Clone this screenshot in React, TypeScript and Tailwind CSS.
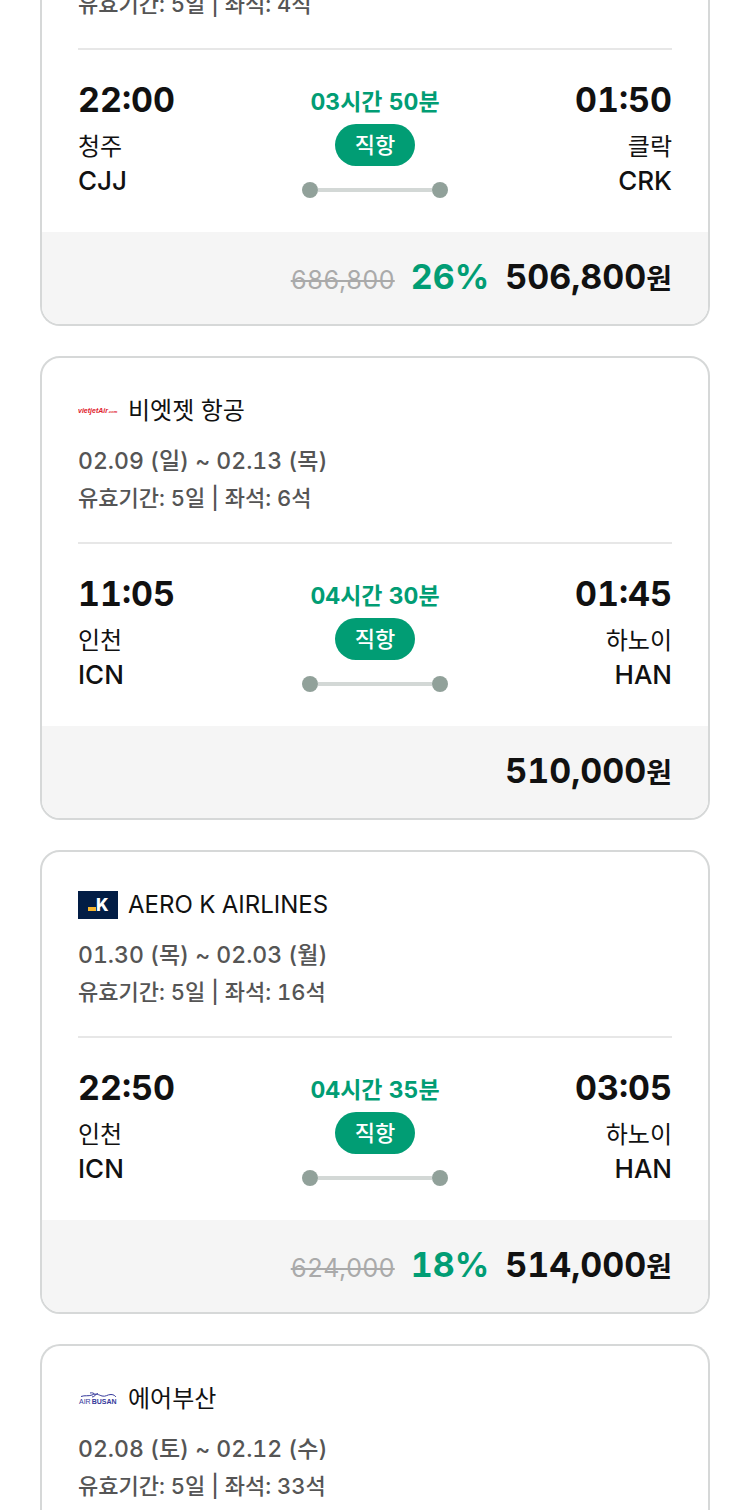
import { clsx } from "clsx";

type Flight = {
  id: number;
  airline?: string;
  logo?: "vietjet" | "aerok" | "airbusan";
  dates?: string;
  seats: number;
  route?: {
    departTime: string;
    departCity: string;
    departCode: string;
    arriveTime: string;
    arriveCity: string;
    arriveCode: string;
    duration: string;
  };
  originalPrice?: string;
  discount?: string;
  price?: string;
};

const flights: Flight[] = [
  {
    id: 1,
    seats: 4,
    route: {
      departTime: "22:00",
      departCity: "청주",
      departCode: "CJJ",
      arriveTime: "01:50",
      arriveCity: "클락",
      arriveCode: "CRK",
      duration: "03시간 50분",
    },
    originalPrice: "686,800",
    discount: "26%",
    price: "506,800",
  },
  {
    id: 2,
    airline: "비엣젯 항공",
    logo: "vietjet",
    dates: "02.09 (일) ~ 02.13 (목)",
    seats: 6,
    route: {
      departTime: "11:05",
      departCity: "인천",
      departCode: "ICN",
      arriveTime: "01:45",
      arriveCity: "하노이",
      arriveCode: "HAN",
      duration: "04시간 30분",
    },
    price: "510,000",
  },
  {
    id: 3,
    airline: "AERO K AIRLINES",
    logo: "aerok",
    dates: "01.30 (목) ~ 02.03 (월)",
    seats: 16,
    route: {
      departTime: "22:50",
      departCity: "인천",
      departCode: "ICN",
      arriveTime: "03:05",
      arriveCity: "하노이",
      arriveCode: "HAN",
      duration: "04시간 35분",
    },
    originalPrice: "624,000",
    discount: "18%",
    price: "514,000",
  },
  {
    id: 4,
    airline: "에어부산",
    logo: "airbusan",
    dates: "02.08 (토) ~ 02.12 (수)",
    seats: 33,
  },
];

function AirlineLogo({ name }: { name: Flight["logo"] }) {
  if (name === "aerok") {
    return (
      <svg width="40" height="28" viewBox="0 0 40 28" aria-hidden="true">
        <rect width="40" height="28" fill="#021d45" />
        <rect x="10" y="16" width="8" height="4" fill="#f5b52e" />
        <text x="18" y="20" fill="#fff" fontSize="17" fontWeight="800" fontFamily="Inter, sans-serif">
          K
        </text>
      </svg>
    );
  }
  if (name === "vietjet") {
    return (
      <svg width="40" height="28" viewBox="0 0 40 28" aria-hidden="true" fill="#e0202b">
        <text x="0" y="16" fontSize="7" fontStyle="italic" fontWeight="700" fontFamily="Liberation Sans, sans-serif">
          vietjet
          <tspan fontSize="7">Air</tspan>
          <tspan fontSize="4">.com</tspan>
        </text>
      </svg>
    );
  }
  return (
    <svg width="40" height="28" viewBox="0 0 40 28" aria-hidden="true" fill="#35399b">
      <path
        d="M3 11.500C7 10 10 11.500 14 10C18 8 21 10 24 11C28 12 29 9.500 33 9.500C36 9.500 37 11 38 12M12 8C14 7.500 16 8 17 9.500M14 12C17 12 17 9 20 8.500"
        fill="none"
        stroke="#35399b"
        strokeWidth="1"
      />
      <text x="1" y="19" fontSize="7" fontFamily="Liberation Sans, sans-serif">
        AIR
        <tspan dx="1" fontWeight="700">BUSAN</tspan>
      </text>
    </svg>
  );
}

function Place({ time, city, code, end }: { time: string; city: string; code: string; end?: boolean }) {
  return (
    <div className={clsx("flex flex-1 flex-col", end && "items-end")}>
      <strong className="mb-2 text-[34px] leading-[44px] font-bold">{time}</strong>
      <span className="text-2xl leading-[34px]">{city}</span>
      <span className="text-[26px] leading-[34px] font-medium">{code}</span>
    </div>
  );
}

function FlightCard({ flight }: { flight: Flight }) {
  const { route } = flight;

  return (
    <li
      className={clsx(
        "overflow-hidden border-x-2 border-[#d6d8d8] bg-white",
        flight.airline && "rounded-t-[20px] border-t-2",
        flight.price && "rounded-b-[20px] border-b-2",
        !flight.price && "grow"
      )}
    >
      <div className={clsx("px-9", flight.airline && "pt-9")}>
        {flight.airline && (
          <h2 className="mb-[14px] flex items-center gap-[10px] text-2xl leading-[34px] font-normal">
            <AirlineLogo name={flight.logo} />
            <span>{flight.airline}</span>
          </h2>
        )}
        <div className="font-medium text-[#555]">
          {flight.dates && <p className="text-[23px] leading-[38px]">{flight.dates}</p>}
          <p className="text-[22px] leading-9">유효기간: 5일 | 좌석: {flight.seats}석</p>
        </div>
        {route && (
          <div className="mt-[26px] flex items-start border-t-2 border-[#e7e7e7] pt-7 pb-[34px]">
            <Place time={route.departTime} city={route.departCity} code={route.departCode} />
            <div className="flex flex-col items-center pt-[6px]">
              <span className="mb-1 text-[23px] leading-9 font-bold text-[#019d74]">{route.duration}</span>
              <span className="mb-4 flex h-[42px] items-center rounded-full bg-[#019d74] px-5 text-[22px] font-medium text-white">
                직항
              </span>
              <div className="flex items-center">
                <i className="size-4 rounded-full bg-[#91a19a]" />
                <i className="h-1 w-[114px] bg-[#d3d8d6]" />
                <i className="size-4 rounded-full bg-[#91a19a]" />
              </div>
            </div>
            <Place time={route.arriveTime} city={route.arriveCity} code={route.arriveCode} end />
          </div>
        )}
      </div>
      {flight.price && (
        <div className="flex h-[92px] items-center justify-end bg-[#f5f5f5] px-9">
          <p className="flex items-baseline gap-4 text-[34px] leading-[44px] font-bold">
            {flight.originalPrice && (
              <del className="text-[25px] leading-9 font-normal text-[#aaa]">{flight.originalPrice}</del>
            )}
            {flight.discount && <span className="text-[#019d74]">{flight.discount}</span>}
            <span>
              {flight.price}
              <span className="text-[28px]">원</span>
            </span>
          </p>
        </div>
      )}
    </li>
  );
}

export default function App() {
  return (
    <main className="flex min-h-screen flex-col overflow-hidden bg-white px-10 font-['Inter','Noto_Sans_CJK_KR',sans-serif] text-[#111] tabular-nums">
      <ul className="-mt-[14px] flex grow flex-col gap-[30px]">
        {flights.map((flight) => (
          <FlightCard key={flight.id} flight={flight} />
        ))}
      </ul>
    </main>
  );
}
